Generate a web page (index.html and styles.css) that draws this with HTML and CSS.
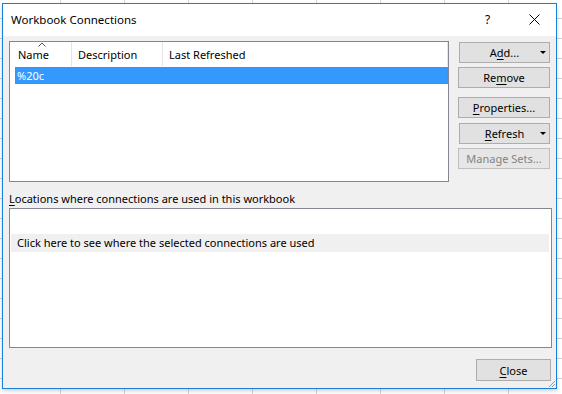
FILE: index.html
```html
<!DOCTYPE html>
<html>
<head>
<meta charset="utf-8">
<link rel="stylesheet" href="styles.css">
</head>
<body>
<div class="dialog">
  <div class="titlebar">
    <span class="title">Workbook Connections</span>
    <span class="help">?</span>
    <span class="xbtn"><svg width="11" height="11" viewBox="0 0 11 11"><path d="M0.5 0.5 L10.5 10.5 M10.5 0.5 L0.5 10.5" stroke="#000" stroke-width="1" fill="none"/></svg></span>
  </div>
  <div class="content">
    <div class="top">
      <div class="listview">
        <div class="lv-header">
          <div class="col col-name">Name<svg class="sort" width="8" height="5" viewBox="0 0 8 5"><path d="M0.5 4.5 L4 1 L7.5 4.5" stroke="#555" stroke-width="1" fill="none"/></svg></div>
          <div class="col col-desc">Description</div>
          <div class="col col-last">Last Refreshed</div>
        </div>
        <div class="lv-row selected">%20c</div>
      </div>
      <div class="buttons">
        <div class="btn b-add"><span class="lbl">A<u>d</u>d...</span><span class="arrow"></span></div>
        <div class="btn b-remove">Re<u>m</u>ove</div>
        <div class="btn b-props"><u>P</u>roperties...</div>
        <div class="btn b-refresh"><span class="lbl"><u>R</u>efresh</span><span class="arrow"></span></div>
        <div class="btn b-manage disabled">Manage Sets...</div>
      </div>
    </div>
    <div class="loc-label"><u>L</u>ocations where connections are used in this workbook</div>
    <div class="loc-list">
      <div class="loc-row">Click here to see where the selected connections are used</div>
    </div>
    <div class="footer">
      <div class="btn b-close"><u>C</u>lose</div>
    </div>
    <svg class="grip" width="8" height="8" viewBox="0 0 8 8"><path d="M7 1 L1 7 M7 4 L4 7" stroke="#9a9a9a" stroke-width="1" fill="none"/></svg>
  </div>
</div>
</body>
</html>
```
FILE: styles.css
```css
html, body {
  margin: 0;
  padding: 0;
}
body {
  width: 562px;
  height: 394px;
  overflow: hidden;
  background-color: #ffffff;
  background-image:
    linear-gradient(to right, transparent 60px, #d4d4d4 60px, #d4d4d4 61px, transparent 61px),
    linear-gradient(to bottom, transparent 18px, #d4d4d4 18px, #d4d4d4 19px, transparent 19px);
  background-size: 64px 100%, 100% 20px;
  background-position: -64px 0, 0 0;
  padding: 3px 0 0 2px;
  box-sizing: border-box;
  font-family: "Noto Sans", "Open Sans", sans-serif;
  font-size: 11px;
  color: #000;
}
.dialog {
  width: 555px;
  height: 386px;
  box-sizing: border-box;
  border: 1px solid #1a7fd6;
  background: #f0f0f0;
  display: flex;
  flex-direction: column;
  box-shadow: 0 2px 4px rgba(0,0,0,0.18);
}
.titlebar {
  height: 32px;
  background: #ffffff;
  display: flex;
  align-items: center;
  padding-left: 8px;
  flex: none;
}
.title {
  font-size: 11.5px;
  flex: 1;
  padding-bottom: 2px;
}
.help {
  font-size: 12px;
  width: 12px;
  margin-right: 32px;
  padding-bottom: 2px;
}
.xbtn {
  display: flex;
  margin-right: 16px;
  margin-bottom: 2px;
}
.content {
  position: relative;
  flex: 1;
  padding: 5px 4px 7px 6px;
  display: flex;
  flex-direction: column;
}
.top {
  display: flex;
  height: 141px;
}
.listview {
  width: 440px;
  height: 141px;
  box-sizing: border-box;
  border: 1px solid #828790;
  background: #ffffff;
  flex: none;
}
.lv-header {
  display: flex;
  height: 24px;
}
.col {
  position: relative;
  box-sizing: border-box;
  line-height: 26px;
  border-right: 1px solid #e5e5e5;
  padding-left: 6px;
}
.col-name {
  width: 62px;
  padding-left: 8px;
}
.col-desc {
  width: 91px;
}
.col-last {
  flex: 1;
}
.sort {
  position: absolute;
  left: 28px;
  top: 0;
}
.lv-row {
  margin: 1px 0 0 5px;
  height: 17px;
  line-height: 17px;
  padding-left: 2px;
}
.selected {
  background: #3399ff;
  color: #ffffff;
  outline: 1px dotted #c86f1e;
  outline-offset: -1px;
}
.buttons {
  margin-left: 9px;
  width: 92px;
  display: flex;
  flex-direction: column;
}
.btn {
  position: relative;
  box-sizing: border-box;
  height: 21px;
  border: 1px solid #adadad;
  background: #e1e1e1;
  display: flex;
  align-items: center;
  justify-content: center;
  font-size: 11px;
}
.btn u {
  text-underline-offset: 2px;
}
.b-add { margin-top: 1px; margin-left: 1px; }
.b-remove { margin-top: 4px; }
.b-props { margin-top: 9px; }
.b-refresh { margin-top: 5px; margin-left: 1px; }
.b-manage { margin-top: 4px; }
.disabled {
  color: #838383;
  border-color: #bfbfbf;
  background: #e6e6e6;
}
.arrow {
  position: absolute;
  right: 3px;
  top: 8px;
  width: 0;
  height: 0;
  border-left: 3px solid transparent;
  border-right: 3px solid transparent;
  border-top: 3px solid #000;
}
.loc-label {
  margin-top: 9px;
  height: 15px;
  line-height: 15px;
  margin-bottom: 2px;
}
.loc-label u {
  text-underline-offset: 2px;
}
.loc-list {
  height: 140px;
  box-sizing: border-box;
  border: 1px solid #828790;
  background: #ffffff;
  padding: 25px 2px 0 1px;
}
.loc-row {
  height: 18px;
  line-height: 18px;
  background: #f0f0f0;
  padding-left: 6px;
}
.footer {
  margin-top: 11px;
  display: flex;
  justify-content: flex-end;
  padding-right: 1px;
}
.b-close {
  width: 75px;
  height: 22px;
}
.grip {
  position: absolute;
  right: 0;
  bottom: 0;
}
```
